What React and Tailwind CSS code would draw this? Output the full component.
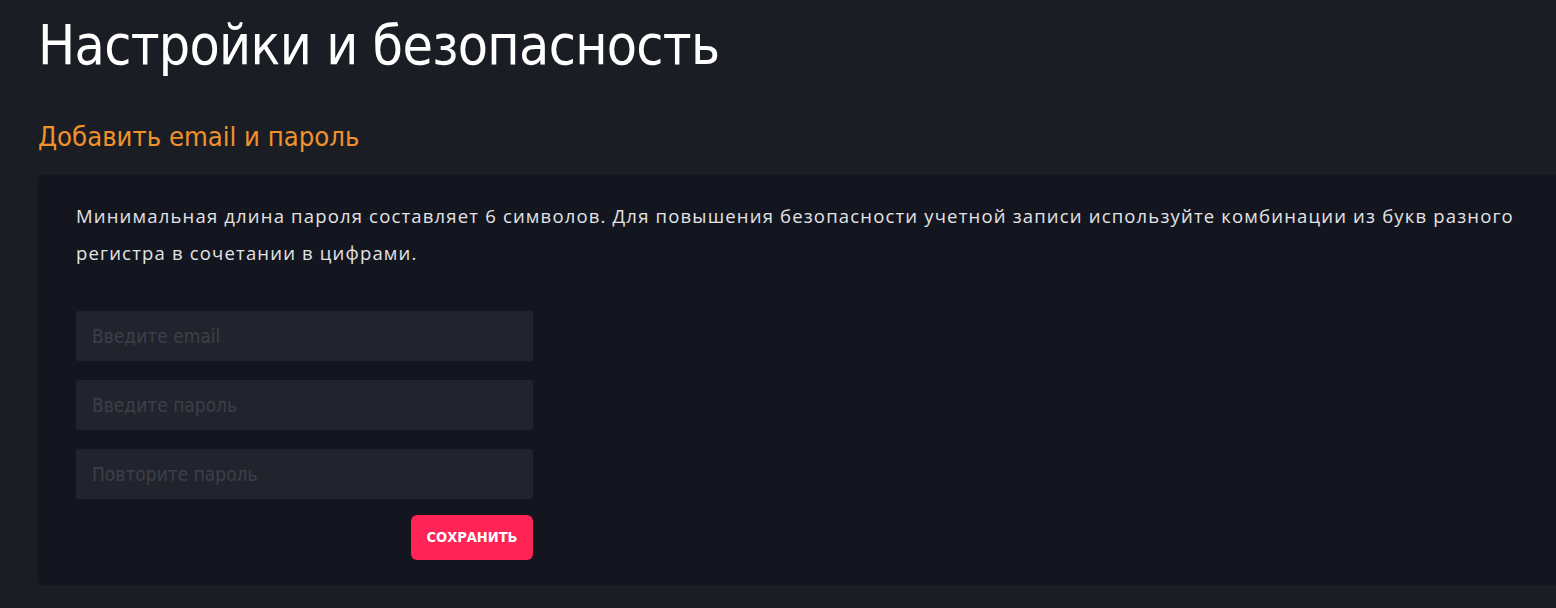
import React from "react";

const fields = [
  { type: "email", placeholder: "Введите email" },
  { type: "password", placeholder: "Введите пароль" },
  { type: "password", placeholder: "Повторите пароль" },
];

const App = () => {
  return (
    <div
      className="min-h-[608px] bg-[#1b1d25] pl-[38px] pt-[12px] overflow-hidden"
      style={{ fontFamily: "'DejaVu Sans Condensed', Roboto, sans-serif" }}
    >
      <h1 className="text-[55px] leading-[66px] text-white font-normal tracking-[-0.7px]">
        Настройки и безопасность
      </h1>

      <h2 className="mt-[44px] text-[27.2px] leading-[30px] text-[#f0922b]">
        Добавить email и пароль
      </h2>

      {/* Card */}
      <div className="mt-[23px] bg-[#14161f] rounded-l-md pl-[38px] pr-[40px] pt-[22px] pb-[25px] w-[1560px]">
        <p className="font-['Open_Sans',sans-serif] text-[18.5px] leading-[37px] tracking-[1.17px] text-[#e2e3e6] max-w-[1470px]">
          Минимальная длина пароля составляет 6 символов. Для повышения безопасности учетной записи используйте комбинации из букв разного регистра в сочетании в цифрами.
        </p>

        <div className="mt-[40px] w-[457px] flex flex-col gap-[19px]">
          {fields.map((f) => (
            <input
              key={f.placeholder}
              type={f.type}
              placeholder={f.placeholder}
              className="h-[50px] w-full rounded-[3px] bg-[#22242d] px-[16px] text-[19px] text-white placeholder-[#3c3f49] outline-none"
            />
          ))}
        </div>

        <div className="w-[457px] flex justify-end mt-[16px]">
          <button className="h-[45px] w-[122px] rounded-[6px] bg-[#ff2356] text-white text-[14.5px] font-bold">
            СОХРАНИТЬ
          </button>
        </div>
      </div>
    </div>
  );
};

export default App;
